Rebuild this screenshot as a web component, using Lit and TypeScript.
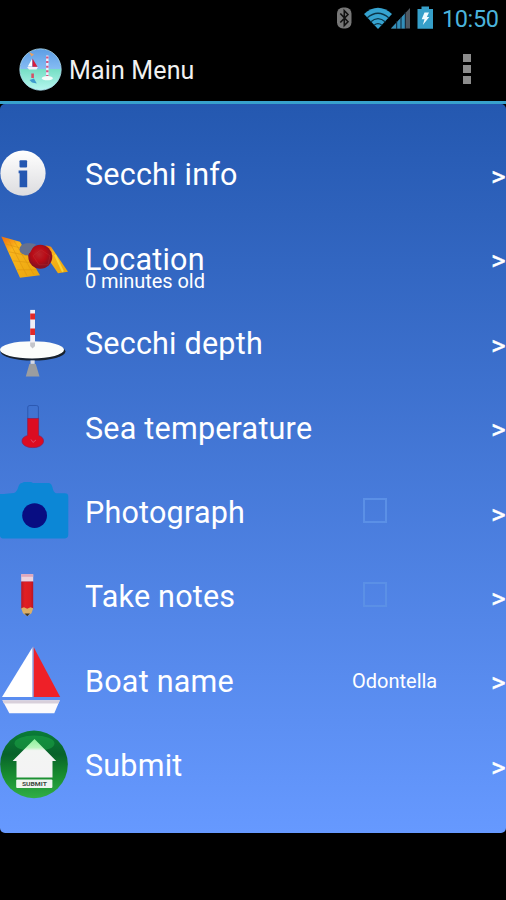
import { LitElement, html, svg, css, nothing } from "lit";
import { customElement } from "lit/decorators.js";

const ROW = 84.4;
const FIRST = 132.8;

interface Item {
  label: string;
  icon: unknown;
  sub?: string;
  check?: boolean;
  value?: string;
}

const infoIcon = svg`
  <defs><linearGradient id="inf" x1="0" y1="0" x2="0" y2="1"><stop offset="0" stop-color="#fff"/><stop offset="1" stop-color="#dcdcdf"/></linearGradient></defs>
  <circle cx="23" cy="173" r="22.6" fill="url(#inf)"/>
  <rect x="19.5" y="160" width="7.6" height="7.2" rx="1" fill="#2457b1"/>
  <path d="M18.6 170.3H27.2V187H19.6V173H18.6Z" fill="#2457b1"/>`;

const satelliteIcon = svg`
  <defs>
    <linearGradient id="pan" x1="0" y1="0" x2="1" y2="1"><stop offset="0" stop-color="#f06b10"/><stop offset=".3" stop-color="#f9b51c"/><stop offset="1" stop-color="#e9a50c"/></linearGradient>
    <radialGradient id="ball" cx=".45" cy=".4"><stop offset="0" stop-color="#b9252c"/><stop offset=".6" stop-color="#b80b16"/><stop offset="1" stop-color="#8b1020"/></radialGradient>
  </defs>
  <path d="M1.3 236.8L20 242L40 275.5L20 278Z" fill="url(#pan)"/>
  <path d="M8 239L27 276M14 241L34 275M5 244L23 249M9 252L28 256M13 261L32 263M17 270L37 270" stroke="#dc960f" stroke-width=".6" fill="none"/>
  <path d="M45.5 245.5L51 247L68 272L58 273.5L49.5 261Z" fill="url(#pan)"/>
  <path d="M55 255L63 272" stroke="#f6d43b" stroke-width="2"/>
  <ellipse cx="27.5" cy="249.5" rx="8" ry="6" fill="#65718f"/>
  <circle cx="40.3" cy="257" r="12" fill="url(#ball)"/>
  <path d="M21 246Q27 242 36 244.5Q33 247 30 253L26 255.5Q20 253 21 246Z" fill="#65718f"/>
  <path d="M33 256L41 250L50 256L48 265L39 265Z" fill="none" stroke="#d04244" stroke-width=".6" opacity=".45"/>`;

const diskIcon = svg`
  <ellipse cx="33" cy="351.2" rx="32.5" ry="9" fill="#17212d"/>
  <ellipse cx="32" cy="349.4" rx="32" ry="8.6" fill="#fbfdfb"/>
  <rect x="30.2" y="309.5" width="4.8" height="37" fill="#f0eef5"/>
  <path d="M30.2 313h4.8v6h-4.8zM30.2 328h4.8v6.5h-4.8z" fill="#e22929"/>
  <path d="M30.2 342h4.8v3.5L32.6 348L30.2 345.5Z" fill="#c4c6cb"/>
  <path d="M30.5 360h4.2v3.5h-4.2z" fill="#d5d9e5"/>
  <path d="M29.4 363.5h6.4L39.5 376H25.8Z" fill="#9b9da0"/>`;

const thermoIcon = svg`
  <path d="M27.8 419V407Q27.8 405.5 30 405.5H36.2Q38.4 405.5 38.4 407V419" fill="none" stroke="#2a56ae" stroke-width=".9"/>
  <path d="M27.6 418.5H38.6V435.5Q43.5 437 43.5 441C43.5 445 39 447.6 32.8 447.6S22 445 22 441Q22 437 27.6 435.5Z" fill="#dc0c22" stroke="#8e1b50" stroke-width=".7"/>
  <path d="M31 439.5l2 3 3-2.5" fill="none" stroke="#e04a66" stroke-width="1"/>`;

const cameraIcon = svg`
  <path d="M0 494.3Q3 494.5 6 494.2L14 493.5Q17 492.5 18.5 487Q19.5 483.5 22 483.4L24 482.4H31L33 483.4H49Q51.5 483.8 52.5 488Q53.5 493 56 493.6H65Q68.3 493.6 68.3 497V535Q68.3 538.8 65 538.8H3Q0 538.8 0 536Z" fill="#0c87d6"/>
  <circle cx="34.6" cy="516" r="12.4" fill="#080d82"/>`;

const pencilIcon = svg`
  <defs><linearGradient id="pen" x1="0" x2="1" y1="0" y2="0"><stop offset="0" stop-color="#b71a2a"/><stop offset=".3" stop-color="#e11f23"/><stop offset=".75" stop-color="#da1d22"/><stop offset="1" stop-color="#b71426"/></linearGradient></defs>
  <rect x="21.2" y="574" width="12" height="7.5" fill="#ecd4df"/>
  <rect x="21.2" y="574" width="12" height="2.6" fill="#dfa7bb"/>
  <rect x="21.2" y="581.3" width="12" height="27.5" fill="url(#pen)"/>
  <path d="M21.2 608L24 607L27.2 608.5L30.5 607L33.2 608L31.5 613L27.3 616L23 613Z" fill="#dcaf65"/>
  <path d="M24.5 613.2H30L27.3 616Z" fill="#37352f"/>`;

const boatIcon = svg`
  <path d="M32.5 647.5V697.3H2Z" fill="#fff"/>
  <path d="M33.7 647.5L60.2 697.3H33.7Z" fill="#ee2028"/>
  <path d="M33.1 647V697" stroke="#b9a7c6" stroke-width=".8"/>
  <path d="M2.4 700.5H59.8L54.3 713.5H9.3Z" fill="#fcfafc"/>
  <path d="M2.4 700.5H59.8L58.4 703.8H3.8Z" fill="#d8cfdb"/>`;

const submitIcon = svg`
  <defs>
    <linearGradient id="grn" x1="0" y1="0" x2="0" y2="1"><stop offset="0" stop-color="#0a7c38"/><stop offset=".35" stop-color="#08622a"/><stop offset=".65" stop-color="#178b2f"/><stop offset="1" stop-color="#31ae45"/></linearGradient>
    <linearGradient id="roof" x1="0" y1="0" x2="0" y2="1"><stop offset="0" stop-color="#8df09b"/><stop offset=".22" stop-color="#b9f6bd"/><stop offset=".3" stop-color="#f3f5f3"/><stop offset="1" stop-color="#f3f3f4"/></linearGradient>
  </defs>
  <circle cx="34" cy="764" r="33.8" fill="url(#grn)"/>
  <ellipse cx="34.5" cy="743" rx="20" ry="8" fill="#22b14b" opacity=".45"/>
  <path d="M34.5 738.7L56.2 760.5H52.5V777.2H16.5V760.5H12.6Z" fill="url(#roof)"/>
  <rect x="16.2" y="779" width="36.2" height="8.6" rx="1" fill="#f1f5f1"/>
  <text x="34.4" y="785.5" font-family="Roboto, sans-serif" font-weight="700" font-size="6" text-anchor="middle" textLength="25" lengthAdjust="spacingAndGlyphs" fill="#3b4a3f">SUBMIT</text>`;

const ITEMS: Item[] = [
  { label: "Secchi info", icon: infoIcon },
  { label: "Location", icon: satelliteIcon, sub: "0 minutes old" },
  { label: "Secchi depth", icon: diskIcon },
  { label: "Sea temperature", icon: thermoIcon },
  { label: "Photograph", icon: cameraIcon, check: true },
  { label: "Take notes", icon: pencilIcon, check: true },
  { label: "Boat name", icon: boatIcon, value: "Odontella" },
  { label: "Submit", icon: submitIcon },
];

@customElement("app-root")
export class AppRoot extends LitElement {
  static styles = css`
    :host {
      display: block;
      height: 900px;
      background: #000;
      color: #fff;
      font-family: Roboto, sans-serif;
      overflow: hidden;
    }
    .status {
      height: 37px;
      display: flex;
      justify-content: flex-end;
      box-sizing: border-box;
      padding-right: 8px;
    }
    .tray { width: 106px; height: 37px; flex: none; }
    .clock {
      width: 56px;
      font-size: 23.5px;
      letter-spacing: -0.4px;
      line-height: 38px;
      color: #4bb4dc;
      white-space: nowrap;
    }
    .bar {
      height: 64px;
      display: flex;
      align-items: center;
      padding: 0 35px 0 19px;
    }
    .logo { width: 43px; height: 43px; }
    .title {
      flex: 1;
      margin-left: 7px;
      font-size: 25px;
      letter-spacing: 0.15px;
      line-height: 30px;
      padding-top: 4px;
      color: #f1f1f1;
    }
    .more { display: grid; gap: 2.6px; }
    .more i { width: 8px; height: 8px; background: #8c8c8c; }
    .rule { height: 3px; background: #38a1cc; }
    .panel {
      height: 729px;
      box-sizing: border-box;
      padding-top: 28.8px;
      border-radius: 5px;
      background: linear-gradient(#2458b0, #6699ff);
    }
    .row {
      height: 84.4px;
      display: grid;
      grid-template-columns: 85px 1fr 116px 39px;
      align-items: center;
    }
    .icon { width: 70px; height: 84.4px; display: block; }
    .name { display: grid; position: relative; }
    .label {
      font-size: 30.5px;
      letter-spacing: 0.22px;
      line-height: 24px;
      padding-top: 1px;
      white-space: nowrap;
    }
    .sub {
      position: absolute;
      left: 0;
      top: 24.5px;
      font-size: 20px;
      line-height: 20px;
      letter-spacing: -0.06px;
      white-space: nowrap;
    }
    .box {
      width: 24px;
      height: 25px;
      box-sizing: border-box;
      border: 2px solid #5b90e6;
      margin: -4px 0 0 11.5px;
    }
    .value { font-size: 20px; line-height: 24px; padding-left: 1px; white-space: nowrap; }
    .go {
      justify-self: end;
      width: 15px;
      font-size: 28px;
      line-height: 30px;
      padding-top: 4px;
      font-weight: 400;
      -webkit-text-stroke: 0.4px #fff;
    }
  `;

  private row(item: Item, i: number) {
    const top = FIRST + i * ROW;
    return html`<div class="row">
      <svg class="icon" viewBox="0 ${top} 70 ${ROW}">${item.icon}</svg>
      <div class="name">
        <span class="label">${item.label}</span>
        ${item.sub ? html`<span class="sub">${item.sub}</span>` : nothing}
      </div>
      <div>
        ${item.check ? html`<div class="box"></div>` : nothing}
        ${item.value ? html`<div class="value">${item.value}</div>` : nothing}
      </div>
      <div class="go">&gt;</div>
    </div>`;
  }

  render() {
    return html`
      <div class="status">
        <svg class="tray" viewBox="336 0 106 37">
          <rect x="337" y="7.5" width="14.5" height="21" rx="6" fill="#777"/>
          <path d="M340.3 13.5L348 21.8L344.3 25.5V10.8L348 14.5L340.3 22.5" fill="none" stroke="#111" stroke-width="1.6"/>
          <path d="M364 14Q378 1.5 392 14L378 29Z" fill="#36a3d0"/>
          <path d="M367 18Q378 8.5 389 18M370.5 22Q378 15.3 385.5 22M374 25.3Q378 22 382 25.3" fill="none" stroke="#0c3548" stroke-width="1.3"/>
          <path d="M391 28.5L410 8V28.5Z" fill="#505860"/>
          <path d="M391 28.5L405 13.4V28.5Z" fill="#338fba"/>
          <path d="M396.7 21V29M401 17V29M405.3 12V29" stroke="#123" stroke-width="1"/>
          <path d="M417.5 9H421.5V6.5H429V9H433V28.8H417.5Z" fill="#369fc9"/>
          <path d="M424.5 12.5H429L426.8 17H429.3L422.8 25L424.5 19.3H421.7Z" fill="#f1fbff"/>
        </svg>
        <div class="clock">10:50</div>
      </div>
      <div class="bar">
        <svg class="logo" viewBox="19 47.5 43 43">
          <defs>
            <linearGradient id="sea" x1="0" y1="0" x2="0" y2="1">
              <stop offset="0" stop-color="#5c9de4"/><stop offset=".49" stop-color="#86bcf3"/>
              <stop offset=".5" stop-color="#77dfc5"/><stop offset="1" stop-color="#b6f6f0"/>
            </linearGradient>
          </defs>
          <circle cx="40.5" cy="69" r="20.7" fill="url(#sea)" stroke="#a9d9ee" stroke-width=".8"/>
          <path d="M32 58.5V66H27.8Z" fill="#fff"/>
          <path d="M32.5 58L37.5 66.3H32.5Z" fill="#d81d3c"/>
          <path d="M27 66.5H38L36.5 69H29Z" fill="#f3f3fa"/>
          <path d="M29 51.5L34 54L31.5 56Z" fill="#e8a062"/>
          <path d="M47.3 55V77" stroke="#eef" stroke-width="2.4"/>
          <path d="M47.3 56V76" stroke="#d25582" stroke-width="2.4" stroke-dasharray="2 2.6"/>
          <ellipse cx="47.3" cy="77.7" rx="5.6" ry="2.1" fill="#f4fdfb"/>
          <path d="M32.6 73V77.5" stroke="#d65066" stroke-width="2.6"/>
          <path d="M29.5 79.5L34 78L36.8 83L32 82Z" fill="#3e9ace"/>
        </svg>
        <div class="title">Main Menu</div>
        <div class="more"><i></i><i></i><i></i></div>
      </div>
      <div class="rule"></div>
      <div class="panel">${ITEMS.map((item, i) => this.row(item, i))}</div>
    `;
  }
}
